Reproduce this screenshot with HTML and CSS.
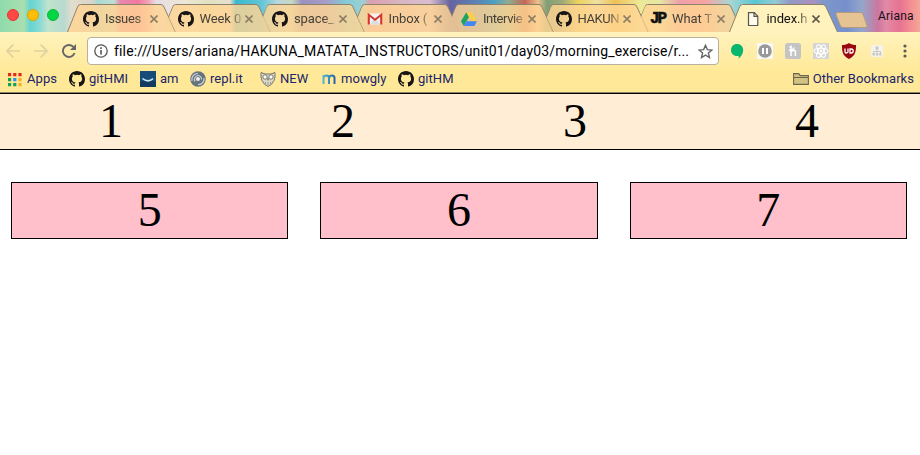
FILE: index.html
```html
<!DOCTYPE html>
<html lang="en">
<head>
<meta charset="utf-8">
<title>index.html</title>
<link rel="stylesheet" href="styles.css">
</head>
<body>
<svg class="defs" width="0" height="0">
  <symbol id="github" viewBox="0 0 16 16"><path d="M8 0C3.58 0 0 3.58 0 8c0 3.54 2.29 6.53 5.47 7.59.4.07.55-.17.55-.38 0-.19-.01-.82-.01-1.49-2.01.37-2.53-.49-2.69-.94-.09-.23-.48-.94-.82-1.13-.28-.15-.68-.52-.01-.53.63-.01 1.08.58 1.23.82.72 1.21 1.87.87 2.33.66.07-.52.28-.87.51-1.07-1.78-.2-3.64-.89-3.64-3.95 0-.87.31-1.59.82-2.15-.08-.2-.36-1.02.08-2.12 0 0 .67-.21 2.2.82a7.6 7.6 0 0 1 4 0c1.53-1.04 2.2-.82 2.2-.82.44 1.1.16 1.92.08 2.12.51.56.82 1.27.82 2.15 0 3.07-1.87 3.75-3.65 3.95.29.25.54.73.54 1.48 0 1.07-.01 1.93-.01 2.2 0 .21.15.46.55.38A8 8 0 0 0 16 8c0-4.42-3.58-8-8-8z" fill="#171515"/></symbol>
  <symbol id="tabshape" viewBox="0 0 110 28"><path d="M.5 28 10.5 3Q11.500 .5 13.500 .5H94Q96 .5 97 3L108.500 28" /></symbol>
  <symbol id="close" viewBox="0 0 8 8"><path d="M.5.5 7.500 7.500M7.500.5.5 7.500" fill="none" stroke-width="1.600"/></symbol>
</svg>

<header class="browser">
  <div class="tabstrip">
    <div class="lights"><i class="light red"></i><i class="light amber"></i><i class="light green"></i></div>
    <div class="tabs">
      <div class="tab t1"><svg class="shape"><use href="#tabshape"/></svg><svg class="fav"><use href="#github"/></svg><span class="label full">Issues</span><svg class="x"><use href="#close"/></svg></div>
      <div class="tab t2"><svg class="shape"><use href="#tabshape"/></svg><svg class="fav"><use href="#github"/></svg><span class="label">Week 0</span><svg class="x"><use href="#close"/></svg></div>
      <div class="tab t3"><svg class="shape"><use href="#tabshape"/></svg><svg class="fav"><use href="#github"/></svg><span class="label">space_</span><svg class="x"><use href="#close"/></svg></div>
      <div class="tab t4"><svg class="shape"><use href="#tabshape"/></svg><svg class="fav" viewBox="0 0 16 16"><path d="M2 2.500h12v11H2z" fill="#f2f2f2"/><path d="M3 13.500 6.500 8h3l3.500 5.500z" fill="#ddd"/><path d="M1.800 13.500V3.800L8 8.700l6.200-4.900v9.700" fill="none" stroke="#d5382e" stroke-width="2.100"/></svg><span class="label">Inbox (</span><svg class="x"><use href="#close"/></svg></div>
      <div class="tab t5"><svg class="shape"><use href="#tabshape"/></svg><svg class="fav" viewBox="0 0 16 16"><path d="M5.300 1.300 8 6 2.700 15 0 10.300z" fill="#1da362"/><path d="M5.300 1.300h5.400L16 10.300h-5.400z" fill="#ffcf48"/><path d="M5.400 10.300H16L13.300 15H2.700z" fill="#4285f4"/></svg><span class="label tight">Intervie</span><svg class="x"><use href="#close"/></svg></div>
      <div class="tab t6"><svg class="shape"><use href="#tabshape"/></svg><svg class="fav"><use href="#github"/></svg><span class="label tight">HAKUN</span><svg class="x"><use href="#close"/></svg></div>
      <div class="tab t7"><svg class="shape"><use href="#tabshape"/></svg><b class="fav jp">JP</b><span class="label">What T</span><svg class="x"><use href="#close"/></svg></div>
      <div class="tab active"><svg class="shape"><use href="#tabshape"/></svg><svg class="fav" viewBox="0 0 16 16"><path d="M3.500 1.700h5.800l3.500 3.500v9.300H3.500zM9 1.700v3.700h3.800" fill="#fffbe9" stroke="#555" stroke-width="1.200"/></svg><span class="label">index.h</span><svg class="x"><use href="#close"/></svg></div>
    </div>
    <svg class="newtab" viewBox="0 0 33 16"><path d="M2.500.5h23q2 0 2.700 2l3.800 11q.6 2-1 2H8q-2 0-2.700-2L1 2.500q-.5-2 1.500-2z" fill="#e5c392" stroke="#b29b80"/></svg>
    <span class="profile">Ariana</span>
  </div>

  <div class="toolbar">
    <svg class="nav back" viewBox="0 0 14 14"><path d="M14 7H1M7.300.7 1 7l6.300 6.300"/></svg>
    <svg class="nav forward" viewBox="0 0 14 14"><path d="M0 7h13M6.700.7 13 7l-6.300 6.300"/></svg>
    <svg class="reload" viewBox="0 0 14 14"><path d="M12.600 9A6 6 0 1 1 11.400 2.900" fill="none" stroke="#666" stroke-width="1.900"/><path d="M14 0v6H8z" fill="#666"/></svg>
    <div class="omnibox">
      <svg class="info" viewBox="0 0 14 14"><circle cx="7" cy="7" r="6.200" fill="none" stroke="#555" stroke-width="1.300"/><path d="M6.200 6h1.600v4.500H6.200zM6.200 3.300h1.600v1.600H6.200z" fill="#555"/></svg>
      <span class="url">file:///Users/ariana/HAKUNA_MATATA_INSTRUCTORS/unit01/day03/morning_exercise/r...</span>
      <svg class="star" viewBox="0 0 14 14"><path d="m7 1.200 1.700 4 4.300.4-3.300 2.800 1 4.200L7 10.400l-3.700 2.200 1-4.200L1 5.600l4.300-.4z" fill="none" stroke="#666" stroke-width="1.300"/></svg>
    </div>
    <div class="extensions">
      <svg viewBox="0 0 16 16"><path d="M8 1c3.800 0 6.200 2.700 6.200 6.200 0 3.800-2.300 6.200-4.500 8.300V13C5 13.500 2 10.700 2 7.200 2 3.700 4.300 1 8 1z" fill="#09b66d"/></svg>
      <svg viewBox="0 0 16 16"><path d="M0 0h16v16H0z" fill="#f8f8f8"/><circle cx="8" cy="8" r="6.800" fill="#999"/><path d="M6 5v6M10 5v6" stroke="#fff" stroke-width="2"/></svg>
      <svg viewBox="0 0 16 16"><rect width="16" height="16" rx="2.500" fill="#c4c4c4"/><path d="M6 13V3.500L4.500 4.200M6 9.500c1-2.500 4.500-3 4.500-.5 0 1.800-1 3.700.8 3.500M4 7c2 .5 5-.5 5-2.500" fill="none" stroke="#fff" stroke-width="1.500"/></svg>
      <svg viewBox="0 0 16 16"><path d="M0 0h16v16H0z" fill="#d5d5d5"/><g fill="none" stroke="#fff" stroke-width="1.100"><ellipse cx="8" cy="8" rx="7" ry="2.700"/><ellipse cx="8" cy="8" rx="7" ry="2.700" transform="rotate(60 8 8)"/><ellipse cx="8" cy="8" rx="7" ry="2.700" transform="rotate(120 8 8)"/></g><circle cx="8" cy="8" r="1.300" fill="#fff"/></svg>
      <svg viewBox="0 0 16 16"><path d="M8 0c2 1.500 4.500 2 7 2 0 7-.5 10.500-7 14C1.500 12.500 1 9 1 2c2.500 0 5-.5 7-2z" fill="#990711"/><path d="M4 5.500V9q0 1 1.200 1T7 9V5.500M9 6h1.200q2 0 2 2t-2 2H9z" fill="none" stroke="#fff" stroke-width="1.300"/></svg>
      <svg viewBox="0 0 16 16"><rect x="2" y="2" width="12" height="12" rx="2" fill="#f5f3eb"/><path d="M8 5v5M4.500 11V8.500h7V11" fill="none" stroke="#c8c8c8"/><path d="M6.500 3.500h3v3h-3zM3.500 10h2.500v2.500H3.500zM7 10h2.300v2.500H7zM10.200 10h2.300v2.500h-2.300z" fill="#c8c8c8"/></svg>
      <svg viewBox="0 0 16 16"><g fill="#5c5a55"><circle cx="8" cy="3" r="1.600"/><circle cx="8" cy="8" r="1.600"/><circle cx="8" cy="13" r="1.600"/></g></svg>
    </div>
  </div>

  <nav class="bookmarks">
    <a class="bm apps"><svg viewBox="0 0 16 16"><g fill="#e5271c"><path d="M1 2h3.200v3.200H1zM6.200 2h3.200v3.200H6.200zM11.400 2h3.200v3.200h-3.200z"/></g><path d="M1 7h3.200v3.200H1zM1 12h3.200v3.200H1zM6.200 12h3.200v3.200H6.200z" fill="#15a052"/><path d="M6.200 7h3.200v3.200H6.200z" fill="#2d8cf0"/><path d="M11.400 7h3.200v3.200h-3.200zM11.400 12h3.200v3.200h-3.200z" fill="#f6ad22"/></svg><span>Apps</span></a>
    <a class="bm hmi"><svg><use href="#github"/></svg><span>gitHMI</span></a>
    <a class="bm am"><svg viewBox="0 0 16 16"><path d="M0 0h16v16H0z" fill="#174c78"/><path d="M0 10h16v6H0z" fill="#123a60"/><path d="M2.500 7.500Q8 12 13 7.700" fill="none" stroke="#c6e8f4" stroke-width="1.600"/></svg><span>am</span></a>
    <a class="bm repl"><svg viewBox="0 0 16 16"><circle cx="8" cy="8" r="7.800" fill="#67747e"/><path d="M2 10A6 6 0 0 1 8 2.500M8 13.500A5.500 5.500 0 0 0 14 7M5 10.500A4 4 0 0 1 8 4.500q3.500.5 3.500 4" fill="none" stroke="#cbd2d5" stroke-width="1.200"/><circle cx="8" cy="8" r="2" fill="#eee"/></svg><span>repl.it</span></a>
    <a class="bm new"><svg viewBox="0 0 16 16"><path d="M1 1.500 5 3h6l4-1.500q.5 5-1 8Q12 14 8 15.500 4 14 2 9.500.5 6.500 1 1.500z" fill="#ddd9c5" stroke="#77756c"/><g fill="#fff" stroke="#77756c"><circle cx="5" cy="6" r="2.200"/><circle cx="11" cy="6" r="2.200"/></g><path d="m8 7-1 2h2zM5.500 11v2M8 11v3M10.500 11v2" stroke="#999"/></svg><span>NEW</span></a>
    <a class="bm mow"><svg viewBox="0 0 16 16"><defs><linearGradient id="mg"><stop stop-color="#55b4d0"/><stop offset="1" stop-color="#2864a6"/></linearGradient></defs><path d="M2.500 13V4M2.500 7Q3 4.500 5.500 4.500 8 4.500 8 7v6M8 7q.5-2.500 3-2.500 2.500 0 2.500 2.500v6" fill="none" stroke="url(#mg)" stroke-width="2"/></svg><span>mowgly</span></a>
    <a class="bm hm"><svg><use href="#github"/></svg><span>gitHM</span></a>
    <a class="bm other"><svg viewBox="0 0 16 16"><path d="M.6 13.400V2.600h5.200l1.400 2h8.200v8.800zM.6 6.500h14.800" fill="#d4c283" stroke="#6e664c" stroke-width="1.100"/></svg><span>Other Bookmarks</span></a>
  </nav>
</header>

<main class="page">
  <div class="topbar"><span>1</span><span>2</span><span>3</span><span>4</span></div>
  <div class="cards"><div>5</div><div>6</div><div>7</div></div>
</main>
</body>
</html>
```
FILE: styles.css
```css
* { box-sizing: border-box; }
body { margin: 0; width: 920px; height: 455px; overflow: hidden; background: #fff; font-family: Roboto, sans-serif; }
svg { display: block; flex: none; }
.defs { position: absolute; }

.browser { height: 93px; background: linear-gradient(#fff2bc 32px, #ffe998 72px, #ffe998); border-bottom: 1px solid #8d8464; }
.tabstrip {
  height: 32px; display: flex; position: relative;
  background: linear-gradient(90deg, #8fdbab 0, #a9dfb0 24px, #65d3d0 30px, #8adbd4 40px, #c1e3cc 48px, #b8d9cf 64px, #e3ddcd 72px, #d9d5c9 92px, #a6d9d2 98px, #c1dfd4 114px, #e787ae 120px, #f178a2 138px, #f4a1b2 148px, #e6dde3 156px, #ece8d6 185px, #dfe2bf 210px, #e7e0d0 230px, #38b9cf 236px, #64c6d6 262px, #b9d7de 278px, #c7d7c0 292px, #9a91c0 302px, #a79bc8 325px, #81cbd8 346px, #9cd1d3 363px, #db9eae 370px, #d8b5c0 400px, #d9bed0 430px, #6663a0 450px, #5c81b4 475px, #4b9fc3 494px, #8cae91 508px, #c66654 525px, #eac18d 538px, #809f75 547px, #9caa76 562px, #eed15d 578px, #eee1a2 597px, #efc256 615px, #ede998 640px, #e5e7a4 660px, #ee9fa9 680px, #f7a4a0 705px, #a9d6d4 730px, #58c7d4 755px, #93cbd2 775px, #9298c5 790px, #a891bd 812px, #7c98cc 825px, #768fcb 846px, #94a6cb 862px, #cc779f 878px, #e28ba5 886px, #e77292 900px, #f59293 912px, #f4a698 920px);
}
.lights { width: 67px; padding: 9px 0 0 7px; display: flex; gap: 8px; }
.light { width: 12px; height: 12px; border-radius: 50%; }
.red { background: #ff4744; border: 1px solid #e1383a; }
.amber { background: #ffbd05; border: 1px solid #dda100; }
.green { background: #05d744; border: 1px solid #0bb83a; }

.tabs { display: flex; width: 768px; padding-top: 4px; }
.tab { width: 94.5px; flex: none; height: 28px; position: relative; display: flex; align-items: center; padding-left: 16px; color: #454038; }
.shape { position: absolute; left: 0; top: 0; width: 110px; height: 28px; fill: rgba(255, 212, 146, .82); stroke: #8f826d; }
.tab:not(.t1):not(.active) .shape { clip-path: polygon(6.500px 12px, 12px 0, 110px 0, 110px 28px, 14px 28px); }
.active { z-index: 2; color: #111; }
.active .shape { fill: #fff2bc; }
.fav { width: 16px; height: 16px; position: relative; margin-top: 2px; flex: none; }
.jp { font: bold 16px/16px "Liberation Mono", monospace; letter-spacing: -2px; color: #111; -webkit-text-stroke: .6px #111; white-space: nowrap; }
.label { position: relative; width: 42px; margin-left: 6px; font-size: 13px; line-height: 16px; margin-top: 2px; white-space: nowrap; letter-spacing: -.1px; -webkit-mask-image: linear-gradient(90deg, #000 70%, rgba(0, 0, 0, .2) 100%); mask-image: linear-gradient(90deg, #000 70%, rgba(0, 0, 0, .2) 100%); }
.label.tight { letter-spacing: -.45px; }
.label.full { letter-spacing: -.3px; -webkit-mask-image: linear-gradient(90deg, #000 65%, rgba(0, 0, 0, .5)); mask-image: linear-gradient(90deg, #000 65%, rgba(0, 0, 0, .5)); }
.x { position: relative; width: 8px; height: 8px; flex: none; margin: 2px 0 0 3px; stroke: #8d7e66; }
.active .x { stroke: #5b574d; }
.newtab { width: 33px; height: 16px; margin: 12px 0 0; }
.profile { margin: 7px 0 0 10px; font: 12px/18px Roboto, sans-serif; color: #15111a; letter-spacing: .2px; }

.toolbar { height: 38px; display: flex; align-items: center; padding-left: 6px; }
.nav { width: 14px; height: 14px; fill: none; stroke: #dfd1a0; stroke-width: 1.700; }
.forward { margin-left: 14px; }
.reload { width: 14px; height: 14px; margin-left: 14px; }
.omnibox { width: 632px; height: 28px; margin-left: 11px; padding-left: 6px; background: #fff; border: 1px solid #b8b09b; border-radius: 4px; display: flex; align-items: center; }
.info { width: 14px; height: 14px; }
.url { width: 577px; margin-left: 6px; font-size: 14px; line-height: 20px; white-space: nowrap; letter-spacing: .165px; color: #000; }
.star { width: 15px; height: 15px; margin-left: 7px; }
.extensions { display: flex; gap: 12px; margin-left: 10px; }
.extensions svg { width: 16px; height: 16px; }

.bookmarks { height: 22px; display: flex; align-items: center; padding: 0 6px 4px 7px; font-size: 13px; line-height: 16px; color: #20246a; }
.bm { display: flex; align-items: center; gap: 4px; white-space: nowrap; letter-spacing: .05px; }
.bm svg { width: 16px; height: 16px; }
.apps { width: 62px; }
.hmi { width: 71px; }
.am { width: 50px; }
.repl { width: 70px; }
.new { width: 61px; }
.mow { width: 77px; }
.other { margin-left: auto; }

.page { font-family: "Liberation Serif", serif; font-size: 48px; line-height: 53px; text-align: center; color: #000; }
.topbar { height: 57px; padding-right: 2px; background: #ffeed5; border: solid #000; border-width: 1px 0; display: flex; margin: 0 -5px; }
.topbar span { flex: 1; }
.cards { display: flex; gap: 32px; padding: 32px 13px 0 11px; }
.cards div { flex: 1; height: 57px; background: #ffbfcb; border: 1px solid #000; }
```
